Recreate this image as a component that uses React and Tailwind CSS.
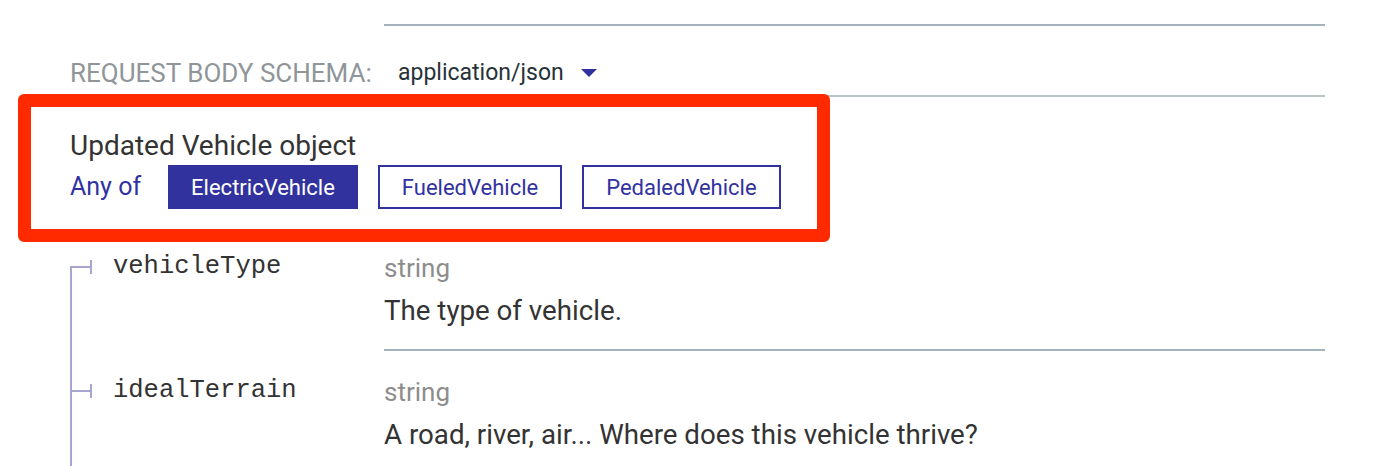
const LINE = "bg-[#a6a6cf]";

const fields = [
  {
    name: "vehicleType",
    type: "string",
    description: "The type of vehicle.",
    first: true,
  },
  {
    name: "idealTerrain",
    type: "string",
    description: "A road, river, air... Where does this vehicle thrive?",
  },
];

const variants = ["ElectricVehicle", "FueledVehicle", "PedaledVehicle"];

function FieldRow({ field }) {
  return (
    <div className="flex">
      <div className="flex w-[384px] shrink-0 pl-[70px]">
        <div className="flex w-[20px] flex-col">
          <div
            className={
              field.first
                ? "h-[17px]"
                : "h-[39px] border-l-2 border-[#a6a6cf]"
            }
          />
          <div className={`h-[2px] ${LINE}`} />
          <div className="flex-1 border-l-2 border-[#a6a6cf]" />
        </div>
        <div
          className={`h-[14px] w-[2px] ${LINE} ${
            field.first ? "mt-[11px]" : "mt-[33px]"
          }`}
        />
        <span
          className={`ml-[21px] font-['Liberation_Mono',monospace] text-[25.5px] leading-[26px] text-[#333] ${
            field.first ? "mt-[5px]" : "mt-[27px]"
          }`}
        >
          {field.name}
        </span>
      </div>
      <div
        className={`w-[941px] border-b-2 border-[#a3b3bd] pb-[20px] ${
          field.first ? "pt-[5px]" : "pt-[27px]"
        }`}
      >
        <div className="text-[26px] leading-[28px] text-[#8d8d8d]">{field.type}</div>
        <div className="mt-[11px] text-[27.7px] leading-[36px] text-[#333]">
          {field.description}
        </div>
      </div>
    </div>
  );
}

export default function App() {
  return (
    <div className="relative h-[466px] w-[1384px] overflow-hidden bg-white font-['Roboto',sans-serif]">
      <div className="pt-[24px]">
        <div className="ml-[384px] h-[2px] w-[941px] bg-[#a3b3bd]" />

        <div className="mt-[33px] flex items-center pl-[70px]">
          <span className="w-[328px] text-[26px] leading-[28px] uppercase text-[#8f9599]">
            Request body schema:
          </span>
          <span className="text-[23px] leading-[28px] text-[#263238]">
            application/json
          </span>
          <svg className="ml-[17px]" width="16" height="8" viewBox="0 0 16 8">
            <path d="M0 0 H16 L8 8 Z" fill="#32329f" />
          </svg>
        </div>

        <div className="ml-[70px] mt-[8px] h-[2px] w-[1255px] bg-[#bcc3c7]" />

        <div className="pl-[70px]">
          <div className="mt-[33px] text-[28px] leading-[32px] text-[#333]">
            Updated Vehicle object
          </div>
          <div className="mt-[3px] flex items-center">
            <span className="mr-[27px] text-[25px] text-[#32329f]">Any of</span>
            <div className="flex gap-[20px]">
              {variants.map((v, i) => (
                <button
                  key={v}
                  className={`h-[44px] border-2 border-[#32329f] text-[22px] ${
                    i === 0
                      ? "bg-[#32329f] px-[21px] text-white"
                      : "bg-white px-[22px] text-[#32329f]"
                  }`}
                >
                  {v}
                </button>
              ))}
            </div>
          </div>
        </div>

        <div className="mt-[40px]">
          {fields.map((f) => (
            <FieldRow key={f.name} field={f} />
          ))}
        </div>
      </div>

      {/* highlight annotation */}
      <div className="pointer-events-none absolute left-[18px] top-[94px] h-[148px] w-[812px] rounded-[6px] border-[13px] border-[#ff2a00]" />
    </div>
  );
}
